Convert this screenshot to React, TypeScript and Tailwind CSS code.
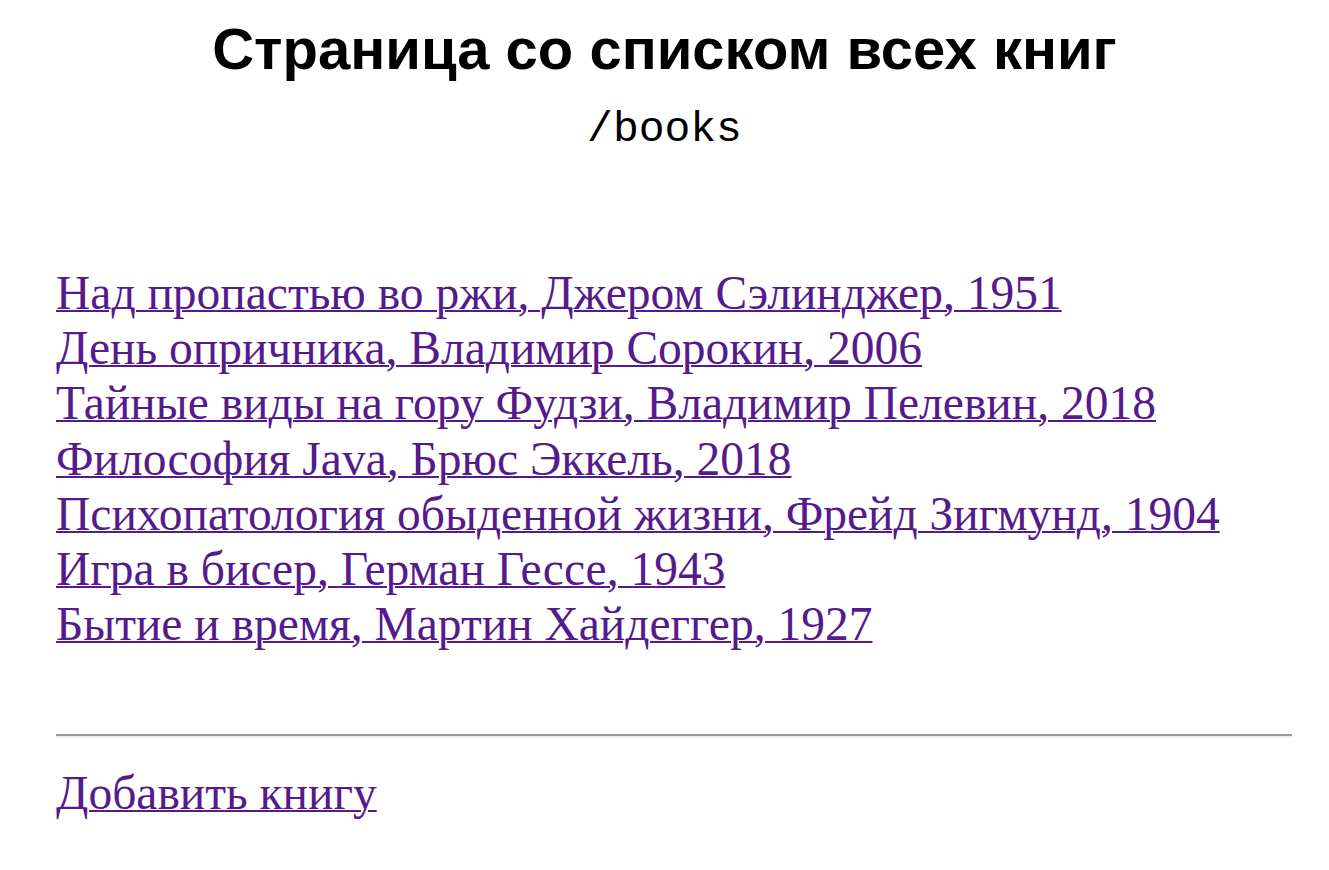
import React from "react";

const books = [
  "Над пропастью во ржи, Джером Сэлинджер, 1951",
  "День опричника, Владимир Сорокин, 2006",
  "Тайные виды на гору Фудзи, Владимир Пелевин, 2018",
  "Философия Java, Брюс Эккель, 2018",
  "Психопатология обыденной жизни, Фрейд Зигмунд, 1904",
  "Игра в бисер, Герман Гессе, 1943",
  "Бытие и время, Мартин Хайдеггер, 1927",
];

const App = () => {
  return (
    <div className="min-h-screen bg-white text-black">
      <h1 className="pt-[16px] text-center text-[58px] font-bold leading-[1.15] font-['Liberation_Sans',Arial,sans-serif]">
        Страница со списком всех книг
      </h1>
      <p className="mt-[25px] text-center text-[43px] leading-none font-['Liberation_Mono','Courier_New',monospace]">
        /books
      </p>

      <div className="ml-[56px] mr-[37px] mt-[115px] font-['Liberation_Serif','Times_New_Roman',serif] text-[47.5px]">
        {/* список книг */}
        <div className="flex flex-col">
          {books.map((b) => (
            <a
              key={b}
              href="#"
              className="leading-[55.3px] text-[#551a8b] underline decoration-[2px] w-fit"
            >
              {b}
            </a>
          ))}
        </div>

        <hr className="mt-[81px] border-t-[2px] border-t-[#9a9a9a] border-b-[2px] border-b-[#eeeeee]" />

        <a
          href="#"
          className="mt-[28px] inline-block leading-[55.3px] text-[#551a8b] underline decoration-[2px]"
        >
          Добавить книгу
        </a>
      </div>
    </div>
  );
};

export default App;
